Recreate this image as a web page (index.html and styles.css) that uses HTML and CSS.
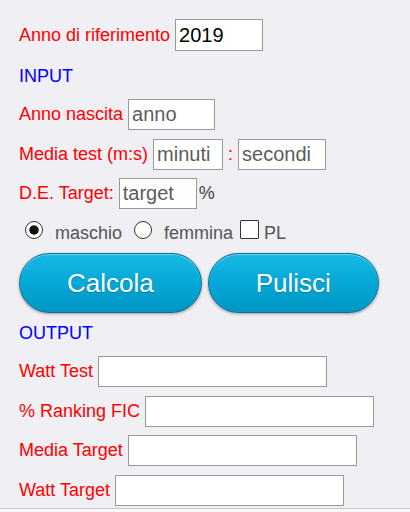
FILE: index.html
```html
<!DOCTYPE html>
<html lang="it">
<head>
<meta charset="utf-8">
<title>Calcolo Watt</title>
<link rel="stylesheet" href="styles.css">
</head>
<body>
<div class="page">
  <div class="row row-first">
    <span class="lbl">Anno di riferimento</span>
    <input class="fld w-88 tall" type="text" value="2019">
  </div>

  <div class="section sec-input">INPUT</div>

  <div class="row row-nascita">
    <span class="lbl">Anno nascita</span>
    <input class="fld w-87" type="text" placeholder="anno">
  </div>

  <div class="row">
    <span class="lbl">Media test (m:s)</span>
    <input class="fld w-70" type="text" placeholder="minuti">
    <span class="lbl">:</span>
    <input class="fld w-88" type="text" placeholder="secondi">
  </div>

  <div class="row">
    <span class="lbl">D.E. Target:</span>
    <input class="fld w-78" type="text" placeholder="target">
    <span class="pct">%</span>
  </div>

  <div class="choices">
    <input class="radio r1" type="radio" name="sesso" checked>
    <span class="opt o1">maschio</span>
    <input class="radio r2" type="radio" name="sesso">
    <span class="opt o2">femmina</span>
    <input class="check" type="checkbox">
    <span class="opt">PL</span>
  </div>

  <div class="buttons">
    <button class="btn" type="button">Calcola</button>
    <button class="btn" type="button">Pulisci</button>
  </div>

  <div class="section sec-output">OUTPUT</div>

  <div class="row row-out">
    <span class="lbl">Watt Test</span>
    <input class="fld w-out" type="text">
  </div>
  <div class="row">
    <span class="lbl">% Ranking FIC</span>
    <input class="fld w-out" type="text">
  </div>
  <div class="row">
    <span class="lbl">Media Target</span>
    <input class="fld w-out" type="text">
  </div>
  <div class="row">
    <span class="lbl">Watt Target</span>
    <input class="fld w-out" type="text">
  </div>
</div>
<div class="footer"></div>
</body>
</html>
```

FILE: styles.css
```css
html, body {
  margin: 0;
  padding: 0;
  background: #efeff4;
}

body {
  font-family: "Liberation Sans", Arial, sans-serif;
  font-size: 18px;
  min-height: 512px;
  display: flex;
  flex-direction: column;
}

.page {
  padding: 19px 0 0 19px;
}

.row {
  display: flex;
  align-items: center;
  gap: 5px;
  height: 31px;
  margin-top: 8.5px;
}

.row-first {
  margin-top: 0;
  height: 32px;
}

.lbl {
  color: #ff0000;
  white-space: nowrap;
}

.pct {
  color: #444;
  margin-left: -3px;
}

.fld {
  box-sizing: border-box;
  height: 31px;
  border: 1px solid #999;
  background: #fff;
  padding: 0 3px;
  margin: 0;
  font-family: "Liberation Sans", Arial, sans-serif;
  font-size: 20px;
  color: #000;
  outline: none;
}

.fld::placeholder {
  color: #5c5c5c;
}

.tall { height: 32px; }
.w-70 { width: 70px; }
.w-78 { width: 78px; }
.w-87 { width: 87px; }
.w-88 { width: 88px; }
.w-out { width: 229px; }

.section {
  color: #0000ff;
  height: 20px;
  line-height: 20px;
}

.sec-input { margin-top: 15px; }
.row-nascita { margin-top: 13px; }

.choices {
  display: flex;
  align-items: baseline;
  margin-top: 11px;
  color: #555;
}

.radio,
.check {
  -webkit-appearance: none;
  appearance: none;
  box-sizing: border-box;
  margin: 0;
  background: #fff;
  border: 1.5px solid #333;
}

.radio {
  width: 18px;
  height: 18px;
  border-radius: 50%;
}

.radio:checked {
  background: radial-gradient(circle, #111 0 4.3px, #fff 5px);
}

.r1 { margin-left: 6px; margin-right: 12px; }
.r2 { margin-right: 12px; }
.o1 { margin-right: 12px; }
.o2 { margin-right: 7px; }

.check {
  width: 19px;
  height: 19px;
  border-radius: 1px;
  margin-right: 5px;
}

.buttons {
  display: flex;
  gap: 6px;
  margin-top: 9px;
}

.btn {
  box-sizing: border-box;
  height: 60px;
  padding: 0 47px;
  border: 1px solid #0b6f92;
  border-radius: 30px;
  background: linear-gradient(to bottom, #18b9e4 0%, #05a9d8 45%, #0096c2 100%);
  box-shadow: inset 0 1px 0 rgba(255, 255, 255, 0.35), 0 1px 3px rgba(0, 0, 0, 0.35);
  color: #fff;
  font-family: "Liberation Sans", Arial, sans-serif;
  font-size: 26px;
  text-shadow: 0 1px 1px rgba(0, 60, 90, 0.35);
  cursor: pointer;
}

.sec-output { margin-top: 10px; }
.row-out { margin-top: 13px; }

.footer {
  margin-top: 2px;
  flex: 1;
  border-top: 1px solid #c8c8c8;
  background: #f7f7f7;
}
```
